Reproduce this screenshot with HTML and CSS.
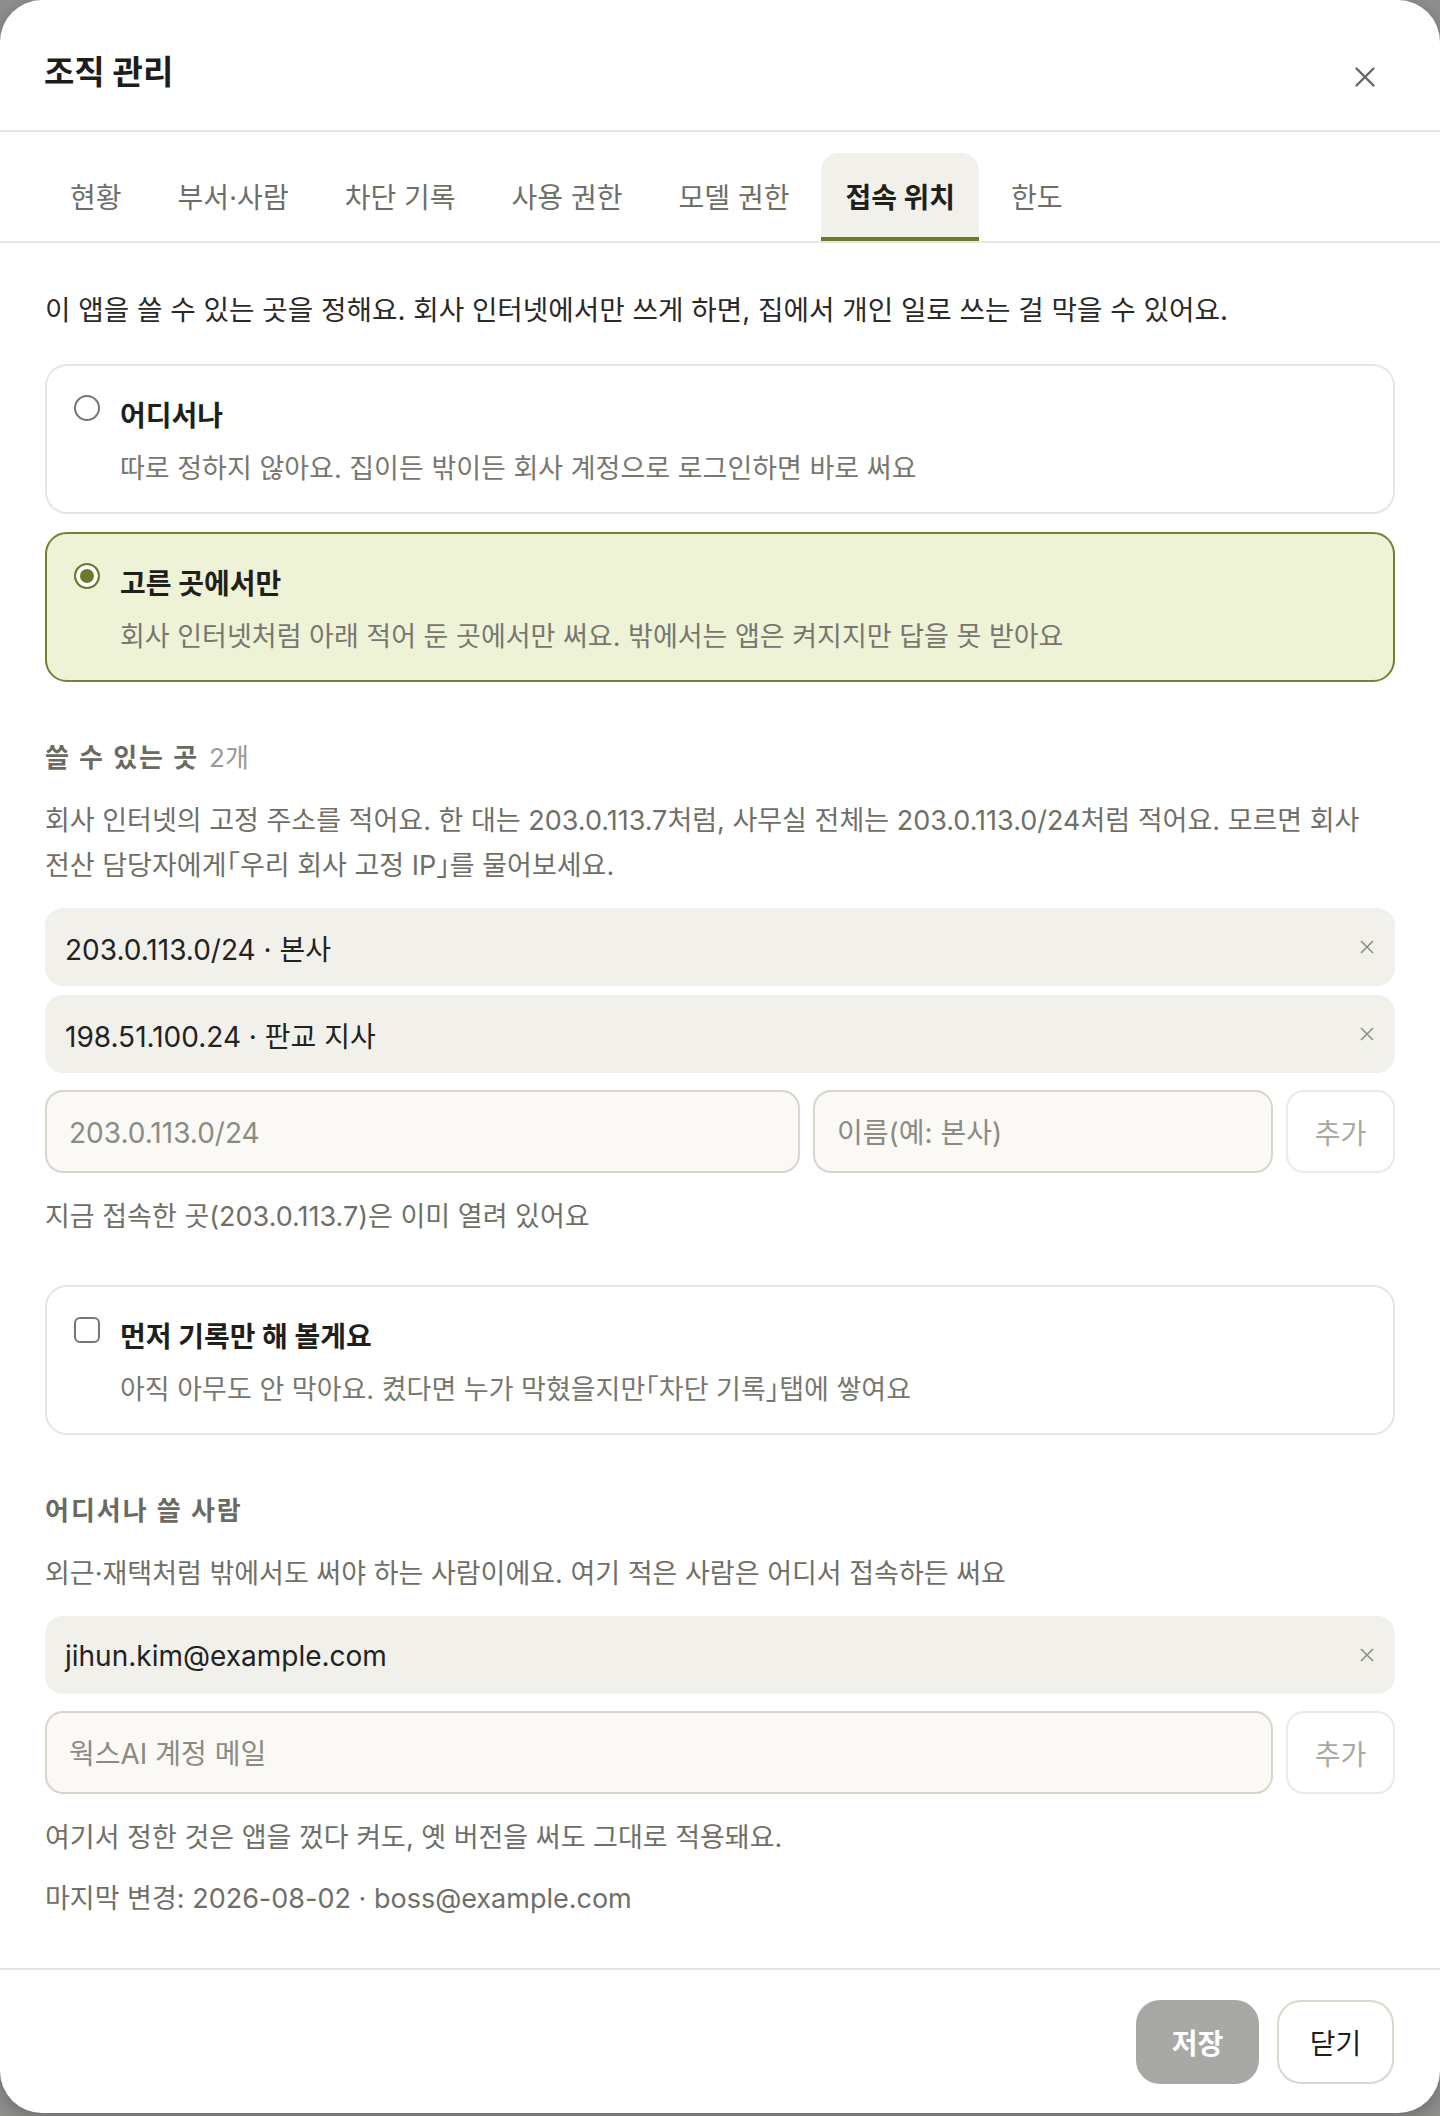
FILE: index.html
```html
<!DOCTYPE html>
<html lang="ko">
<head>
<meta charset="utf-8">
<title>조직 관리</title>
<link rel="stylesheet" href="styles.css">
</head>
<body>
<div class="modal">
  <header class="modal-head">
    <h1 class="modal-title">조직 관리</h1>
    <button class="icon-close" aria-label="닫기">
      <svg width="22" height="22" viewBox="0 0 22 22"><path d="M2.5 2.5 L19.5 19.5 M19.5 2.5 L2.5 19.5" stroke="#66665f" stroke-width="2.4" stroke-linecap="round" fill="none"/></svg>
    </button>
  </header>

  <nav class="tabs">
    <div class="tab">현황</div>
    <div class="tab">부서·사람</div>
    <div class="tab">차단 기록</div>
    <div class="tab">사용 권한</div>
    <div class="tab">모델 권한</div>
    <div class="tab tab-active">접속 위치</div>
    <div class="tab">한도</div>
  </nav>

  <main class="content">
    <p class="intro">이 앱을 쓸 수 있는 곳을 정해요. 회사 인터넷에서만 쓰게 하면, 집에서 개인 일로 쓰는 걸 막을 수 있어요.</p>

    <div class="options">
      <label class="option">
        <span class="radio"></span>
        <span class="option-body">
          <span class="option-title">어디서나</span>
          <span class="option-desc">따로 정하지 않아요. 집이든 밖이든 회사 계정으로 로그인하면 바로 써요</span>
        </span>
      </label>
      <label class="option option-selected">
        <span class="radio radio-checked"></span>
        <span class="option-body">
          <span class="option-title">고른 곳에서만</span>
          <span class="option-desc">회사 인터넷처럼 아래 적어 둔 곳에서만 써요. 밖에서는 앱은 켜지지만 답을 못 받아요</span>
        </span>
      </label>
    </div>

    <h2 class="section-head">쓸 수 있는 곳<span class="count">2개</span></h2>
    <p class="help">회사 인터넷의 고정 주소를 적어요. 한 대는 203.0.113.7처럼, 사무실 전체는 203.0.113.0/24처럼 적어요. 모르면 회사 전산 담당자에게「우리 회사 고정 IP」를 물어보세요.</p>

    <div class="list">
      <div class="item"><span>203.0.113.0/24 · 본사</span><span class="remove"><svg width="16" height="16" viewBox="0 0 16 16"><path d="M2 2 L14 14 M14 2 L2 14" stroke="#8f8f88" stroke-width="1.6" fill="none"/></svg></span></div>
      <div class="item"><span>198.51.100.24 · 판교 지사</span><span class="remove"><svg width="16" height="16" viewBox="0 0 16 16"><path d="M2 2 L14 14 M14 2 L2 14" stroke="#8f8f88" stroke-width="1.6" fill="none"/></svg></span></div>
    </div>

    <div class="add-row add-row-ip">
      <input class="field" type="text" placeholder="203.0.113.0/24">
      <input class="field" type="text" placeholder="이름(예: 본사)">
      <button class="add-btn">추가</button>
    </div>
    <p class="note">지금 접속한 곳(203.0.113.7)은 이미 열려 있어요</p>

    <label class="option option-check">
      <span class="checkbox"></span>
      <span class="option-body">
        <span class="option-title">먼저 기록만 해 볼게요</span>
        <span class="option-desc">아직 아무도 안 막아요. 켰다면 누가 막혔을지만「차단 기록」탭에 쌓여요</span>
      </span>
    </label>

    <h2 class="section-head">어디서나 쓸 사람</h2>
    <p class="help">외근·재택처럼 밖에서도 써야 하는 사람이에요. 여기 적은 사람은 어디서 접속하든 써요</p>

    <div class="list">
      <div class="item"><span>jihun.kim@example.com</span><span class="remove"><svg width="16" height="16" viewBox="0 0 16 16"><path d="M2 2 L14 14 M14 2 L2 14" stroke="#8f8f88" stroke-width="1.6" fill="none"/></svg></span></div>
    </div>

    <div class="add-row add-row-mail">
      <input class="field" type="text" placeholder="웍스AI 계정 메일">
      <button class="add-btn">추가</button>
    </div>
    <p class="note">여기서 정한 것은 앱을 껐다 켜도, 옛 버전을 써도 그대로 적용돼요.</p>
    <p class="note note-last">마지막 변경: 2026-08-02 · boss@example.com</p>
  </main>

  <footer class="modal-foot">
    <button class="btn btn-save">저장</button>
    <button class="btn btn-close">닫기</button>
  </footer>
</div>
</body>
</html>
```

FILE: styles.css
```css
* { box-sizing: border-box; }

html, body {
  margin: 0;
  padding: 0;
}

body {
  background: #8f8f8d;
  font-family: Inter, "Noto Sans CJK KR", sans-serif;
  font-feature-settings: "halt";
  word-break: keep-all;
  color: #22221f;
  width: 1440px;
  height: 2116px;
  overflow: hidden;
}

.modal {
  width: 1440px;
  height: 2113px;
  background: #ffffff;
  border-radius: 42px;
  display: flex;
  flex-direction: column;
  overflow: hidden;
  box-shadow: 0 4px 18px rgba(0, 0, 0, 0.25);
}

.modal-head {
  display: flex;
  align-items: center;
  justify-content: space-between;
  padding: 52px 46px 38px 44px;
  border-bottom: 2px solid #e8e6df;
}

.modal-title {
  margin: 0;
  font-size: 33px;
  line-height: 40px;
  font-weight: 700;
  color: #1d1d1b;
}

.icon-close {
  border: 0;
  background: none;
  padding: 0;
  width: 22px;
  height: 22px;
  margin-right: 18px;
  margin-top: 10px;
  display: flex;
}

.tabs {
  display: flex;
  gap: 8px;
  padding: 21px 46px 0;
  border-bottom: 2px solid #e8e6df;
}

.tab {
  padding: 27px 24px 21px;
  font-size: 28px;
  line-height: 36px;
  color: #6f6f68;
  border-radius: 18px 18px 0 0;
  border-bottom: 4px solid transparent;
}

.tab-active {
  background: #f1f0eb;
  color: #1f1f1c;
  font-weight: 700;
  border-bottom-color: #6d7a2c;
}

.content {
  flex: 1;
  padding: 49px 45px 0 45px;
}

.intro {
  margin: 0;
  font-size: 27.7px;
  line-height: 36px;
  color: #2a2a27;
}

.options {
  margin-top: 36px;
  display: flex;
  flex-direction: column;
  gap: 18px;
}

.option {
  display: flex;
  gap: 20px;
  padding: 28px 27px 29px;
  border: 2px solid #e8e6df;
  border-radius: 22px;
  background: #ffffff;
}

.option-selected {
  background: #eef2d7;
  border-color: #75812f;
}

.option-check {
  margin-top: 50px;
}

.radio {
  flex: none;
  width: 26px;
  height: 26px;
  border-radius: 50%;
  border: 2px solid #77776f;
  background: #ffffff;
  margin-top: 1px;
}

.radio-checked {
  border-color: #6d7a2c;
  background: #6d7a2c;
  box-shadow: inset 0 0 0 4px #ffffff;
}

.checkbox {
  flex: none;
  width: 26px;
  height: 26px;
  border-radius: 6px;
  border: 2px solid #77776f;
  background: #ffffff;
  margin-top: 2px;
}

.option-body {
  display: flex;
  flex-direction: column;
  gap: 17px;
}

.option-title {
  padding-top: 8px;
  font-size: 28px;
  line-height: 28px;
  font-weight: 700;
  color: #1f1f1c;
}

.option-desc {
  padding-top: 8px;
  font-size: 27px;
  line-height: 28px;
  color: #77776f;
}

.section-head {
  margin: 58px 0 0;
  font-size: 26px;
  line-height: 36px;
  font-weight: 700;
  letter-spacing: 2px;
  color: #6a6a62;
}

.count {
  font-weight: 400;
  letter-spacing: 0;
  color: #9a9a92;
  margin-left: 10px;
}

.help {
  margin: 22px 0 0;
  font-size: 27px;
  line-height: 45px;
  color: #6f6f67;
}

.list {
  margin-top: 20px;
  display: flex;
  flex-direction: column;
  gap: 9px;
}

.item {
  height: 78px;
  display: flex;
  align-items: center;
  justify-content: space-between;
  padding: 2px 20px 0 20px;
  background: #f1f0eb;
  border-radius: 18px;
  font-size: 28px;
  color: #22221f;
}

.remove {
  display: flex;
  margin-top: -2px;
}

.add-row {
  margin-top: 17px;
  display: grid;
  gap: 13px;
  height: 83px;
}

.add-row-ip {
  grid-template-columns: 755px 1fr 109px;
}

.add-row-mail {
  grid-template-columns: 1fr 109px;
}

.field {
  height: 83px;
  width: 100%;
  border: 2px solid #d9d5c9;
  border-radius: 18px;
  background: #faf9f5;
  padding: 2px 22px 0;
  font-family: Inter, "Noto Sans CJK KR", sans-serif;
  font-size: 28px;
  color: #22221f;
  outline: none;
}

.field::placeholder {
  color: #8b8b84;
}

.add-btn {
  height: 83px;
  border: 2px solid #eceae3;
  border-radius: 18px;
  background: #ffffff;
  font-family: Inter, "Noto Sans CJK KR", sans-serif;
  font-size: 28px;
  color: #a9a9a3;
  padding: 0;
}

.note {
  margin: 26px 0 0;
  font-size: 27px;
  line-height: 36px;
  color: #6f6f67;
}

.note-last {
  margin-top: 25px;
}

.modal-foot {
  border-top: 2px solid #e8e6df;
  padding: 30px 46px 29px;
  display: flex;
  justify-content: flex-end;
  gap: 18px;
}

.btn {
  height: 84px;
  border-radius: 24px;
  font-family: Inter, "Noto Sans CJK KR", sans-serif;
  font-size: 28px;
  padding: 0;
}

.btn-save {
  width: 123px;
  border: 0;
  background: #a8a8a5;
  color: #ffffff;
  font-weight: 700;
}

.btn-close {
  width: 117px;
  border: 2px solid #dcd8cc;
  background: #ffffff;
  color: #1f1f1c;
}
```
